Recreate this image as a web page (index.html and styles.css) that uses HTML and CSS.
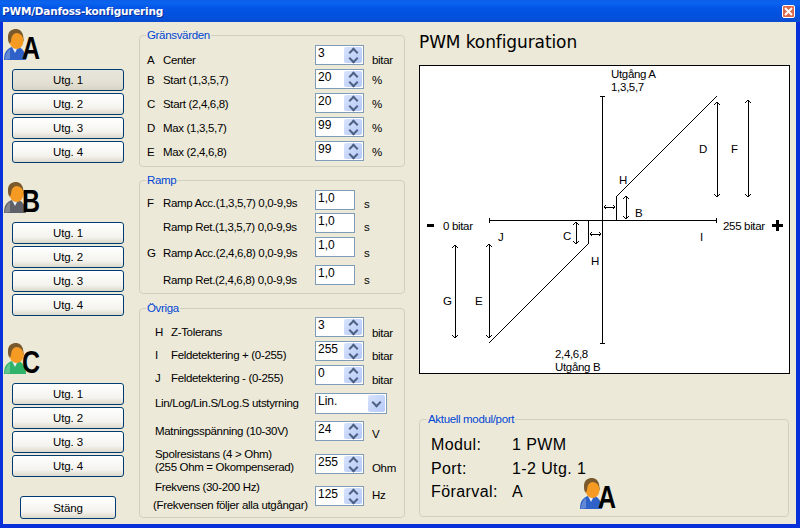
FILE: index.html
```html
<!DOCTYPE html>
<html lang="sv">
<head>
<meta charset="utf-8">
<title>PWM/Danfoss-konfigurering</title>
<link rel="stylesheet" href="styles.css">
</head>
<body>
<svg class="defs" width="0" height="0" aria-hidden="true">
  <symbol id="person" viewBox="0 0 22 32">
    <path d="M0 31 C0 24 2 20 8 18 L15 18 C19 20 22 24 22 31 Z" fill="currentColor"/>
    <path d="M1 31 C1 26 3 22 6 20 L6 30 Z" fill="#fff" opacity=".25"/>
    <path d="M8 18 L11 24 L14 18 Z" fill="#e6f0ff"/>
    <path d="M4 8 C4 2 8 0 12 0 C15 0 18 2 19 6 L20 13 L16 6 L8 7 L6 15 C4 13 4 11 4 8 Z" fill="#7a5a2c"/>
    <ellipse cx="12.500" cy="12" rx="7" ry="8" fill="#f59a23"/>
    <path d="M5 9 C6 4 10 3 13 3 C9 5 7 7 7 13 L5.500 14 Z" fill="#7a5a2c"/>
  </symbol>
</svg>
<div class="window">
  <header class="titlebar">
    <span class="title">PWM/Danfoss-konfigurering</span>
    <span class="close">
      <svg width="9" height="9" viewBox="0 0 9 9"><path d="M1 1 L8 8 M8 1 L1 8" stroke="#fff" stroke-width="2"/></svg>
    </span>
  </header>
  <main class="main">
    <nav class="drivers">
      <section class="driver driver-a">
        <div class="badge blue"><svg class="person"><use href="#person"/></svg><span class="letter">A</span></div>
        <div class="btns">
          <button class="btn active">Utg. 1</button>
          <button class="btn">Utg. 2</button>
          <button class="btn">Utg. 3</button>
          <button class="btn">Utg. 4</button>
        </div>
      </section>
      <section class="driver driver-b">
        <div class="badge gray"><svg class="person"><use href="#person"/></svg><span class="letter">B</span></div>
        <div class="btns">
          <button class="btn">Utg. 1</button>
          <button class="btn">Utg. 2</button>
          <button class="btn">Utg. 3</button>
          <button class="btn">Utg. 4</button>
        </div>
      </section>
      <section class="driver driver-c">
        <div class="badge green"><svg class="person"><use href="#person"/></svg><span class="letter">C</span></div>
        <div class="btns">
          <button class="btn">Utg. 1</button>
          <button class="btn">Utg. 2</button>
          <button class="btn">Utg. 3</button>
          <button class="btn">Utg. 4</button>
        </div>
      </section>
      <button class="btn close-btn">Stäng</button>
    </nav>

    <div class="settings">
      <fieldset class="group limits">
        <legend>Gränsvärden</legend>
        <div class="row"><div class="lbl o8"><span class="key">A</span><span>Center</span></div><div class="field spin"><span class="val">3</span><span class="spinner"><i class="up"></i><i class="down"></i></span></div><span class="unit o8">bitar</span></div>
        <div class="row"><div class="lbl o4"><span class="key">B</span><span>Start (1,3,5,7)</span></div><div class="field spin"><span class="val">20</span><span class="spinner"><i class="up"></i><i class="down"></i></span></div><span class="unit o4">%</span></div>
        <div class="row"><div class="lbl o4"><span class="key">C</span><span>Start (2,4,6,8)</span></div><div class="field spin"><span class="val">20</span><span class="spinner"><i class="up"></i><i class="down"></i></span></div><span class="unit o4">%</span></div>
        <div class="row"><div class="lbl o4"><span class="key">D</span><span>Max (1,3,5,7)</span></div><div class="field spin"><span class="val">99</span><span class="spinner"><i class="up"></i><i class="down"></i></span></div><span class="unit o4">%</span></div>
        <div class="row"><div class="lbl o4"><span class="key">E</span><span>Max (2,4,6,8)</span></div><div class="field spin"><span class="val">99</span><span class="spinner"><i class="up"></i><i class="down"></i></span></div><span class="unit o4">%</span></div>
      </fieldset>

      <fieldset class="group ramp">
        <legend>Ramp</legend>
        <div class="row h23"><div class="lbl o6"><span class="key">F</span><span>Ramp Acc.(1,3,5,7) 0,0-9,9s</span></div><div class="field plain"><span class="val">1,0</span></div><span class="unit unit-s o7">s</span></div>
        <div class="row"><div class="lbl o7"><span class="key"></span><span>Ramp Ret.(1,3,5,7) 0,0-9,9s</span></div><div class="field plain"><span class="val">1,0</span></div><span class="unit unit-s o7">s</span></div>
        <div class="row h28"><div class="lbl o9"><span class="key">G</span><span>Ramp Acc.(2,4,6,8) 0,0-9,9s</span></div><div class="field plain"><span class="val">1,0</span></div><span class="unit unit-s o9">s</span></div>
        <div class="row"><div class="lbl o8"><span class="key"></span><span>Ramp Ret.(2,4,6,8) 0,0-9,9s</span></div><div class="field plain"><span class="val">1,0</span></div><span class="unit unit-s o8">s</span></div>
      </fieldset>

      <fieldset class="group other">
        <legend>Övriga</legend>
        <div class="row"><div class="lbl in o8"><span class="key">H</span><span>Z-Tolerans</span></div><div class="field spin"><span class="val">3</span><span class="spinner"><i class="up"></i><i class="down"></i></span></div><span class="unit o9">bitar</span></div>
        <div class="row"><div class="lbl in o7"><span class="key">I</span><span>Feldetektering + (0-255)</span></div><div class="field spin"><span class="val">255</span><span class="spinner"><i class="up"></i><i class="down"></i></span></div><span class="unit o8">bitar</span></div>
        <div class="row h28"><div class="lbl in o6"><span class="key">J</span><span>Feldetektering - (0-255)</span></div><div class="field spin"><span class="val">0</span><span class="spinner"><i class="up"></i><i class="down"></i></span></div><span class="unit o8">bitar</span></div>
        <div class="row h28"><div class="lbl in o3">Lin/Log/Lin.S/Log.S utstyrning</div><div class="combo"><span class="val">Lin.</span><span class="drop"><i class="down"></i></span></div></div>
        <div class="row h33"><div class="lbl in o3">Matningsspänning (10-30V)</div><div class="field spin"><span class="val">24</span><span class="spinner"><i class="up"></i><i class="down"></i></span></div><span class="unit o6">V</span></div>
        <div class="row h32"><div class="lbl in stack tight">Spolresistans (4 &gt; Ohm)<br>(255 Ohm = Okompenserad)</div><div class="field spin"><span class="val">255</span><span class="spinner"><i class="up"></i><i class="down"></i></span></div><span class="unit o7">Ohm</span></div>
        <div class="row"><div class="lbl in stack wide">Frekvens (30-200 Hz)<br><span class="nudge">(Frekvensen följer alla utgångar)</span></div><div class="field spin"><span class="val">125</span><span class="spinner"><i class="up"></i><i class="down"></i></span></div><span class="unit o2">Hz</span></div>
      </fieldset>
    </div>

    <div class="preview">
      <h1 class="heading">PWM konfiguration</h1>
      <div class="canvas">
        <svg class="diagram" viewBox="420 66 369 307" width="369" height="307">
          <g class="strong">
            <path d="M602.500 96 V344 M600 96.500 H605 M600 343.500 H605"/>
            <path d="M489 220.500 H717 M489.500 218 V223 M716.500 218 V223"/>
            <path d="M616.500 220 V196 M588.500 221 V244"/>
          </g>
          <g class="thin">
            <path d="M617 196 L717 96 M588 244 L489 343"/>
            <path d="M717.500 102 V197 M714 105 L717 102 L720 105 M714 194 L717 197 L720 194"/>
            <path d="M748.500 100 V197 M745 103 L748 100 L751 103 M745 194 L748 197 L751 194"/>
            <path d="M626.500 196 V219 M623 199 L626 196 L629 199 M623 216 L626 219 L629 216"/>
            <path d="M576.500 222 V244 M573 225 L576 222 L579 225 M573 241 L576 244 L579 241"/>
            <path d="M455.500 245 V338 M452 248 L455 245 L458 248 M452 335 L455 338 L458 335"/>
            <path d="M489.500 244 V338 M486 247 L489 244 L492 247 M486 335 L489 338 L492 335"/>
            <path d="M604 207.500 H615 M606 205 L604 207 L606 209 M613 205 L615 207 L613 209"/>
            <path d="M590 234.500 H601 M592 232 L590 234 L592 236 M599 232 L601 234 L599 236"/>
          </g>
          <g class="labels">
            <text x="611" y="78">Utgång A</text>
            <text x="611" y="91">1,3,5,7</text>
            <text x="699" y="153">D</text>
            <text x="731" y="153">F</text>
            <text x="619" y="184">H</text>
            <text x="635" y="217">B</text>
            <text x="443" y="230">0 bitar</text>
            <text x="723" y="230">255 bitar</text>
            <text x="498" y="241">J</text>
            <text x="563" y="240">C</text>
            <text x="700" y="241">I</text>
            <text x="591" y="265">H</text>
            <text x="443" y="305">G</text>
            <text x="475" y="305">E</text>
            <text x="555" y="358">2,4,6,8</text>
            <text x="555" y="371">Utgång B</text>
          </g>
          <path class="sign" d="M427 225.500 H434 M772 225.500 H783 M777.500 220 V231"/>
        </svg>
      </div>
      <fieldset class="group current">
        <legend>Aktuell modul/port</legend>
        <dl class="status">
          <dt>Modul:</dt><dd>1 PWM</dd>
          <dt>Port:</dt><dd>1-2 Utg. 1</dd>
          <dt>Förarval:</dt><dd>A</dd>
        </dl>
        <div class="badge blue floating"><svg class="person"><use href="#person"/></svg><span class="letter">A</span></div>
      </fieldset>
    </div>
  </main>
</div>
</body>
</html>
```
FILE: styles.css
```css
* { box-sizing: border-box; }
html, body { margin: 0; padding: 0; }
body { width: 800px; height: 528px; overflow: hidden; font-family: "Liberation Sans", Arial, sans-serif; font-size: 12px; color: #000; }
.defs { position: absolute; }

.window { width: 800px; height: 528px; display: flex; flex-direction: column; background: #0831d9; padding: 0 4px 4px 3px; }
.titlebar { height: 22px; margin: 0 -4px 0 -3px; padding: 0 5px 0 2px; display: flex; align-items: center; justify-content: space-between;
  background: linear-gradient(#0a5fe8 0, #0a64f0 3px, #0255e5 8px, #0250dc 17px, #0a4cd0 22px); }
.title { color: #fff; font-family: "DejaVu Sans", sans-serif; font-weight: bold; font-size: 10.500px; letter-spacing: -.2px; text-shadow: 1px 1px 0 #0a2f9c; }
.close { width: 13px; height: 13px; border: 1px solid #fff; border-radius: 2px; background: #d9694a; display: flex; align-items: center; justify-content: center; margin-top: 1px; }
.close svg { display: block; }

.main { flex: 1; min-height: 0; display: flex; background: #ece9d8; }

.drivers { width: 136px; padding: 7px 0 0 9px; display: flex; flex-direction: column; }
.driver-b { margin-top: 19px; }
.driver-c { margin-top: 27px; }
.badge { display: flex; height: 32px; }
.person { width: 22px; height: 32px; flex: none; display: block; margin-left: -8px; }
.blue .person { color: #2f62c8; }
.gray .person { color: #5f6168; }
.green .person { color: #2fb36a; }
.letter { font-size: 32px; line-height: 32px; font-weight: bold; margin: 3px 0 0 -4px; transform: scaleX(.78); transform-origin: 0 50%; }
.btns { margin-top: 8px; display: flex; flex-direction: column; gap: 2px; }
.btn { width: 112px; height: 22px; padding: 0; font: 11.500px "Liberation Sans", Arial, sans-serif; letter-spacing: -.1px; color: #000; border: 1px solid #003c74; border-radius: 3px;
  background: linear-gradient(#fff, #f4f3ee 70%, #dcd8ca); }
.btn.active { background: linear-gradient(#e8e6dc, #e2dfd2 70%, #d8d4c4); }
.close-btn { width: 96px; height: 23px; margin: 19px 0 0 8px; }

.settings { width: 266px; display: flex; flex-direction: column; padding-top: 6px; }
.group { margin: 0; padding: 0 0 0 7px; border: 1px solid #d0d0bf; border-radius: 4px; min-width: 0; }
.group legend { padding: 0 1px; margin-left: -1px; color: #0046d5; font-size: 11.500px; letter-spacing: -.33px; line-height: 14px; }
.limits { height: 139px; padding-top: 3px; }
.ramp { height: 121px; margin-top: 6px; padding-top: 3px; }
.other { height: 217px; margin-top: 7px; padding-top: 2px; }

.row { display: flex; align-items: flex-start; height: 24px; }
.h23 { height: 23px; }
.h28 { height: 28px; }
.h32 { height: 32px; }
.h33 { height: 33px; }
.lbl { width: 168px; flex: none; display: flex; line-height: 14px; font-size: 11.500px; letter-spacing: -.33px; white-space: nowrap; }
.lbl.in { padding-left: 8px; }
.key { width: 16px; flex: none; }
.stack { display: block; }
.tight { line-height: 13px; margin-top: -6px; }
.wide { line-height: 18px; margin-top: -8px; }
.nudge { margin-left: -2px; }
.o2 { margin-top: 2px; }
.o3 { margin-top: 3px; }
.o4 { margin-top: 4px; }
.o6 { margin-top: 6px; }
.o7 { margin-top: 7px; }
.o8 { margin-top: 8px; }
.o9 { margin-top: 9px; }

.unit { line-height: 14px; font-size: 11.500px; letter-spacing: -.33px; margin-left: 8px; }
.unit-s { margin-left: 9px; }

.field, .combo { height: 20px; background: #fff; border: 1px solid #7f9db9; display: flex; justify-content: space-between; flex: none; }
.field.spin { width: 49px; }
.field.plain { width: 40px; border-color: #7f9db9; }
.combo { width: 72px; height: 21px; }
.val { font-size: 12px; line-height: 15px; padding-left: 2px; }
.spinner { width: 18px; margin: 1px; display: flex; flex-direction: column; background: linear-gradient(135deg, #d8e3fc, #b5c9f7); border-radius: 2px; }
.spinner i { flex: 1; display: flex; align-items: center; justify-content: center; }
.drop { flex: none; width: 17px; margin: 1px; display: flex; align-items: center; justify-content: center; background: linear-gradient(135deg, #d8e3fc, #b5c9f7); border-radius: 2px; }
.drop i { display: block; }
.up::before, .down::before { content: ""; display: block; width: 5px; height: 5px; border: solid #4d6185; border-width: 2px 0 0 2px; }
.up::before { transform: translateY(1px) rotate(45deg); }
.down::before { transform: translateY(-1px) rotate(225deg); }

.preview { width: 370px; margin-left: 14px; display: flex; flex-direction: column; }
.heading { margin: 10px 0 0; font: normal 17px/20px "DejaVu Sans", sans-serif; height: 23px; letter-spacing: -.1px; }
.canvas { width: 371px; height: 309px; background: #fff; border: 1px solid #000; margin-top: 10px; }
.diagram { display: block; }
.strong path { fill: none; stroke: #000; stroke-width: 1; shape-rendering: crispEdges; }
.thin path { fill: none; stroke: #000; stroke-width: 1; shape-rendering: crispEdges; }
.labels text { font: 11.500px "Liberation Sans", Arial, sans-serif; letter-spacing: -.33px; fill: #000; }
.sign { fill: none; stroke: #000; stroke-width: 3; }

.current { position: relative; height: 105px; margin-top: 38px; width: 370px; padding: 0 0 0 11px; }
.current legend { margin-left: -4px; }
.status { margin: 8px 0 0; display: grid; grid-template-columns: 81px auto; grid-auto-rows: 23.500px; font-size: 16px; line-height: 22px; letter-spacing: .4px; }
.status dt, .status dd { margin: 0; }
.floating { position: absolute; left: 160px; top: 52px; }
.floating .person { margin-left: 0; }
```
